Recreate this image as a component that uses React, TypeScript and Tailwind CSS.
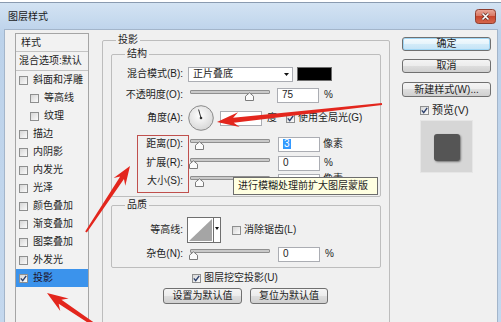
import React from "react";

type Pt = [number, number];

function arrowPoints(tail: Pt, tip: Pt, headLen: number, headW: number, shaftW: number, tailW: number) {
  const [x1, y1] = tail;
  const [x2, y2] = tip;
  const len = Math.hypot(x2 - x1, y2 - y1);
  const ux = (x2 - x1) / len;
  const uy = (y2 - y1) / len;
  const nx = -uy;
  const ny = ux;
  const bx = x2 - ux * headLen;
  const by = y2 - uy * headLen;
  const nb = headLen * 0.25;
  const pts: Pt[] = [
    [x1 + (nx * tailW) / 2, y1 + (ny * tailW) / 2],
    [bx + ux * nb + (nx * shaftW) / 2, by + uy * nb + (ny * shaftW) / 2],
    [bx + (nx * headW) / 2, by + (ny * headW) / 2],
    [x2, y2],
    [bx - (nx * headW) / 2, by - (ny * headW) / 2],
    [bx + ux * nb - (nx * shaftW) / 2, by + uy * nb - (ny * shaftW) / 2],
    [x1 - (nx * tailW) / 2, y1 - (ny * tailW) / 2],
  ];
  return pts.map((p) => p.join(",")).join(" ");
}

function Check({ checked = false }: { checked?: boolean }) {
  return (
    <span className="flex h-[9px] w-[9px] shrink-0 items-center justify-center border border-[#8e8f8f] bg-[linear-gradient(135deg,#d6d6d6,#fbfbfb)]">
      {checked && (
        <svg width="7" height="7" viewBox="0 0 7 7">
          <path d="M0.8 3.4 L2.7 5.6 L6.2 0.8" fill="none" stroke="#2b3f6c" strokeWidth="1.4" />
        </svg>
      )}
    </span>
  );
}

function Slider({ pos, className = "" }: { pos: number; className?: string }) {
  return (
    <div className={"relative h-[16px] w-[80px] shrink-0 " + className}>
      <div className="mt-[3px] h-[4px] w-full rounded-[1px] border border-[#8f8f8f] bg-[#c9c9c9]" />
      <svg className="absolute top-[5px]" style={{ left: pos - 4 }} width="9" height="9" viewBox="0 0 9 9">
        <path d="M0.5 8.5V4.2L4.5 0.8L8.5 4.2V8.5Z" fill="#fbfbfb" stroke="#7b7b7b" />
      </svg>
    </div>
  );
}

function Field({ children, className = "" }: { children?: React.ReactNode; className?: string }) {
  return (
    <div className={"flex h-[15px] w-[42px] shrink-0 items-center border border-[#abadb3] bg-white pl-[4px] " + className}>
      {children}
    </div>
  );
}

function Btn({ children, className = "" }: { children: React.ReactNode; className?: string }) {
  return (
    <div
      className={
        "flex items-center justify-center rounded-[3px] border border-[#707070] bg-[linear-gradient(#f4f4f4,#ececec_50%,#dedede_50%,#d0d0d0)] " +
        className
      }
    >
      {children}
    </div>
  );
}

const ITEMS: { label: string; indent?: boolean; selected?: boolean }[] = [
  { label: "斜面和浮雕" },
  { label: "等高线", indent: true },
  { label: "纹理", indent: true },
  { label: "描边" },
  { label: "内阴影" },
  { label: "内发光" },
  { label: "光泽" },
  { label: "颜色叠加" },
  { label: "渐变叠加" },
  { label: "图案叠加" },
  { label: "外发光" },
  { label: "投影", selected: true },
];

export default function App() {
  return (
    <div className="relative h-[322px] w-[501px] overflow-hidden bg-white font-['Liberation_Sans','Noto_Sans_CJK_SC',sans-serif] text-[10px] leading-none text-[#1e1e1e]">
      <div className="mt-[2px] flex h-[320px] flex-col border-t border-[#8a9bb0] bg-[linear-gradient(#d3e3f3,#bcd2ea_30px,#c4d8ee)] pl-[4px] pr-[3px]">
        {/* title bar */}
        <div className="flex h-[26px] shrink-0 items-start justify-between">
          <span className="ml-[4px] mt-[9px] text-[#1a1a1a]">图层样式</span>
          <svg className="mr-[2px] mt-[6px]" width="21" height="15" viewBox="0 0 21 15">
            <defs>
              <linearGradient id="cls" x1="0" y1="0" x2="0" y2="1">
                <stop offset="0" stopColor="#eaa99b" />
                <stop offset="0.5" stopColor="#d7735f" />
                <stop offset="0.5" stopColor="#c8452d" />
                <stop offset="1" stopColor="#d6694f" />
              </linearGradient>
            </defs>
            <rect x="0.5" y="0.5" width="20" height="14" rx="3" fill="url(#cls)" stroke="#8d3d2f" />
            <path d="M7.5 4.5 L13.5 10.5 M13.5 4.5 L7.5 10.5" stroke="#5a2a22" strokeWidth="3" />
            <path d="M7.5 4.5 L13.5 10.5 M13.5 4.5 L7.5 10.5" stroke="#ffffff" strokeWidth="1.6" />
          </svg>
        </div>

        {/* dialog body */}
        <div className="flex flex-1 border border-[#a3b5ca] bg-[#f0f0f0]">
          {/* style list */}
          <div className="ml-[10px] mt-[3px] flex w-[74px] shrink-0 flex-col border border-b-0 border-[#a5a5a5] bg-[#f2f2f2]">
            <div className="flex h-[18px] shrink-0 items-center border-b border-[#c3c3c3] pl-[5px]">样式</div>
            <div className="flex h-[19px] shrink-0 items-center border-b border-[#c3c3c3] pl-[3px]">混合选项:默认</div>
            {ITEMS.map((it) => (
              <div
                key={it.label}
                className={
                  "flex h-[18px] shrink-0 items-center gap-[5px] " +
                  (it.indent ? "pl-[14px] " : "pl-[3px] ") +
                  (it.selected ? "bg-[#3b93ec] text-[#1e1226]" : "")
                }
              >
                <Check checked={it.selected} />
                <span>{it.label}</span>
              </div>
            ))}
          </div>

          {/* 投影 group */}
          <fieldset className="ml-[13px] mt-[4px] h-[300px] w-[288px] shrink-0 rounded-[2px] border border-[#bdbdbd]">
            <legend className="ml-[13px] px-[2px] leading-[12px]">投影</legend>

            <fieldset className="mx-[8px] mt-[2px] rounded-[2px] border border-[#bdbdbd]">
              <legend className="ml-[13px] px-[2px] leading-[12px]">结构</legend>
              <div className="flex flex-col pb-[7px] pt-[6px]">
                <div className="flex h-[16px] items-center">
                  <span className="w-[71px] shrink-0 text-right">混合模式(B):</span>
                  <div className="ml-[5px] flex h-[15px] w-[105px] shrink-0 items-center justify-between border border-[#abadb3] bg-white pl-[4px] pr-[3px]">
                    <span>正片叠底</span>
                    <svg width="5" height="3" viewBox="0 0 5 3">
                      <path d="M0 0H5L2.5 3Z" fill="#111" />
                    </svg>
                  </div>
                  <div className="ml-[4px] h-[14px] w-[35px] shrink-0 border border-[#6d6d6d] bg-black" />
                </div>

                <div className="mt-[5px] flex h-[16px] items-center">
                  <span className="w-[71px] shrink-0 text-right">不透明度(O):</span>
                  <Slider pos={59} className="ml-[7px]" />
                  <Field className="ml-[7px]">75</Field>
                  <span className="ml-[5px]">%</span>
                </div>

                <div className="mt-[2px] flex h-[26px] items-center">
                  <span className="w-[71px] shrink-0 text-right">角度(A):</span>
                  <svg className="ml-[5px] shrink-0" width="26" height="26" viewBox="0 0 26 26">
                    <defs>
                      <radialGradient id="dial" cx="0.45" cy="0.4" r="0.65">
                        <stop offset="0" stopColor="#ffffff" />
                        <stop offset="1" stopColor="#d4d4d4" />
                      </radialGradient>
                    </defs>
                    <circle cx="13" cy="13" r="12.3" fill="url(#dial)" stroke="#8a8a8a" />
                    <path d="M13 13 L10.6 4.5" stroke="#333" strokeWidth="1" />
                    <circle cx="13" cy="13" r="1.3" fill="#333" />
                  </svg>
                  <Field className="ml-[6px] w-[33px]" />
                  <span className="ml-[5px]">度</span>
                  <span className="ml-[9px]">
                    <Check checked />
                  </span>
                  <span className="ml-[3px]">使用全局光(G)</span>
                </div>

                <div className="mt-[5px] flex h-[16px] items-center">
                  <span className="w-[71px] shrink-0 text-right">距离(D):</span>
                  <Slider pos={9} className="ml-[7px]" />
                  <Field className="ml-[8px]">
                    <span className="bg-[#3399ff] px-[1px] text-white">3</span>
                  </Field>
                  <span className="ml-[3px]">像素</span>
                </div>

                <div className="mt-[3px] flex h-[16px] items-center">
                  <span className="w-[71px] shrink-0 text-right">扩展(R):</span>
                  <Slider pos={3} className="ml-[7px]" />
                  <Field className="ml-[8px]">0</Field>
                  <span className="ml-[4px]">%</span>
                </div>

                <div className="mt-[2px] flex h-[16px] items-center">
                  <span className="w-[71px] shrink-0 text-right">大小(S):</span>
                  <Slider pos={9} className="ml-[7px]" />
                  <Field className="ml-[8px]" />
                  <span className="ml-[3px] self-start pt-[1px]">像素</span>
                </div>
              </div>
            </fieldset>

            <fieldset className="mx-[8px] mt-[2px] rounded-[2px] border border-[#bdbdbd]">
              <legend className="ml-[13px] px-[2px] leading-[12px]">品质</legend>
              <div className="flex flex-col pb-[5px] pt-[6px]">
                <div className="flex h-[26px] items-center">
                  <span className="w-[71px] shrink-0 text-right">等高线:</span>
                  <div className="ml-[4px] flex h-[26px] w-[34px] shrink-0 border border-[#6f6f6f] bg-white">
                    <svg className="shrink-0" width="25" height="24" viewBox="0 0 25 24">
                      <polygon points="1,23 24,1 24,23" fill="#a5a5a5" />
                    </svg>
                    <div className="flex flex-1 justify-center border-l border-[#6f6f6f] pt-[9px]">
                      <svg width="4" height="3" viewBox="0 0 4 3">
                        <path d="M0 0H4L2 3Z" fill="#111" />
                      </svg>
                    </div>
                  </div>
                  <span className="ml-[11px]">
                    <Check />
                  </span>
                  <span className="ml-[3px]">消除锯齿(L)</span>
                </div>

                <div className="mt-[3px] flex h-[16px] items-center">
                  <span className="w-[71px] shrink-0 text-right">杂色(N):</span>
                  <Slider pos={3} className="ml-[7px]" />
                  <Field className="ml-[8px]">0</Field>
                  <span className="ml-[5px]">%</span>
                </div>
              </div>
            </fieldset>

            <div className="mt-[3px] flex h-[14px] items-center pl-[89px]">
              <Check checked />
              <span className="ml-[3px]">图层挖空投影(U)</span>
            </div>

            <div className="mt-[3px] flex h-[16px] items-center pl-[60px]">
              <Btn className="h-[16px] w-[79px]">设置为默认值</Btn>
              <Btn className="ml-[8px] h-[16px] w-[78px]">复位为默认值</Btn>
            </div>
          </fieldset>

          {/* buttons column */}
          <div className="ml-[12px] mt-[7px] flex w-[89px] shrink-0 flex-col">
            <Btn className="h-[14px] border-[#3c7fb1] bg-[linear-gradient(#f5fbfe,#e5f3fb_50%,#d3ebf9_50%,#c4e3f6)] shadow-[inset_0_0_0_1px_#9fd6f5]">
              确定
            </Btn>
            <Btn className="mt-[8px] h-[14px]">取消</Btn>
            <Btn className="mt-[9px] h-[15px]">新建样式(W)...</Btn>
            <div className="ml-[18px] mt-[7px] flex h-[12px] items-center">
              <Check checked />
              <span className="ml-[3px] text-[11px]">预览(V)</span>
            </div>
            <div className="ml-[18px] mt-[4px] flex h-[53px] w-[53px] items-center justify-center border border-[#e6e6e6] bg-[#d6d6d6]">
              <div className="mt-[2px] h-[27px] w-[26px] rounded-[3px] bg-[#555555] shadow-[1px_1px_2px_rgba(0,0,0,0.45)]" />
            </div>
          </div>
        </div>
      </div>

      {/* annotations */}
      <div className="absolute left-[137px] top-[135px] h-[58px] w-[52px] border border-[#c0504d]" />
      <div className="absolute left-[233px] top-[177px] flex h-[18px] w-[145px] items-center border border-[#6d6d6d] bg-[#ffffe1] pl-[4px]">
        进行模糊处理前扩大图层蒙版
      </div>
      <svg className="pointer-events-none absolute inset-0" width="501" height="322" viewBox="0 0 501 322">
        <polygon points={arrowPoints([382, 104], [217, 122], 22, 15, 5, 2)} fill="#e3261d" />
        <polygon points={arrowPoints([86, 232], [130, 166], 19, 14, 4.5, 2)} fill="#e3261d" />
        <polygon points={arrowPoints([102, 330], [47, 293], 21, 15, 5, 3)} fill="#e3261d" />
      </svg>
    </div>
  );
}
